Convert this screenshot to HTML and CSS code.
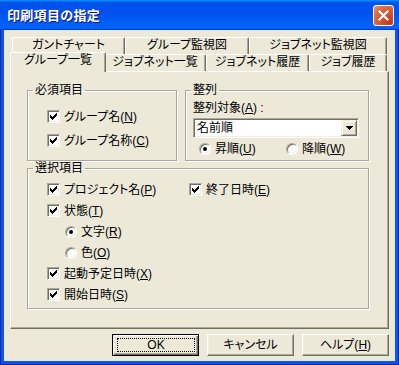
FILE: index.html
```html
<!DOCTYPE html>
<html lang="ja">
<head>
<meta charset="utf-8">
<title>印刷項目の指定</title>
<link rel="stylesheet" href="styles.css">
</head>
<body>
<div class="window">
  <div class="titlebar">
    <span class="title">印刷項目の指定</span>
    <span class="close"><svg width="19" height="19" viewBox="0 0 19 19"><path d="M5.5 5.5L13.5 13.5M13.5 5.5L5.5 13.5" stroke="#fff" stroke-width="2.2" stroke-linecap="square"/></svg></span>
  </div>
  <div class="frame">
    <div class="client">
      <div class="tabs">
        <div class="tabrow back">
          <div class="tab t-gantt">ガントチャート</div>
          <div class="tab t-gmon">グループ監視図</div>
          <div class="tab t-jmon">ジョブネット監視図</div>
        </div>
        <div class="tabrow">
          <div class="tab t-glist selected">グループ一覧</div>
          <div class="tab t-jlist">ジョブネット一覧</div>
          <div class="tab t-jhist">ジョブネット履歴</div>
          <div class="tab t-jobhist">ジョブ履歴</div>
        </div>
      </div>
      <div class="panel">
        <div class="toprow">
          <fieldset class="group g-req">
            <legend>必須項目</legend>
            <div class="gbody req-body">
              <label class="item"><span class="cb"><svg width="11" height="11" viewBox="0 0 11 11"><path d="M8 2h1v1H8zM7 3h2v1H7zM2 4h1v1H2zM6 4h3v1H6zM2 5h2v1H2zM5 5h3v1H5zM2 6h5v1H2zM3 7h3v1H3zM4 8h1v1H4z"/></svg></span><span class="lbl">グループ名(<u>N</u>)</span></label>
              <label class="item"><span class="cb"><svg width="11" height="11" viewBox="0 0 11 11"><path d="M8 2h1v1H8zM7 3h2v1H7zM2 4h1v1H2zM6 4h3v1H6zM2 5h2v1H2zM5 5h3v1H5zM2 6h5v1H2zM3 7h3v1H3zM4 8h1v1H4z"/></svg></span><span class="lbl">グループ名称(<u>C</u>)</span></label>
            </div>
          </fieldset>
          <fieldset class="group g-sort">
            <legend>整列</legend>
            <div class="gbody sort-body">
              <div class="sortlabel">整列対象(<u>A</u>) :</div>
              <div class="combo">
                <span class="combo-text">名前順</span>
                <span class="dd"><svg width="7" height="4" viewBox="0 0 7 4"><path d="M0 0h7v1H0zM1 1h5v1H1zM2 2h3v1H2zM3 3h1v1H3z"/></svg></span>
              </div>
              <div class="radios">
                <label class="item r-asc"><span class="rb on"></span><span class="lbl">昇順(<u>U</u>)</span></label>
                <label class="item"><span class="rb"></span><span class="lbl">降順(<u>W</u>)</span></label>
              </div>
            </div>
          </fieldset>
        </div>
        <fieldset class="group g-sel">
          <legend>選択項目</legend>
          <div class="gbody sel-body">
            <div class="pair">
              <label class="item col1"><span class="cb"><svg width="11" height="11" viewBox="0 0 11 11"><path d="M8 2h1v1H8zM7 3h2v1H7zM2 4h1v1H2zM6 4h3v1H6zM2 5h2v1H2zM5 5h3v1H5zM2 6h5v1H2zM3 7h3v1H3zM4 8h1v1H4z"/></svg></span><span class="lbl">プロジェクト名(<u>P</u>)</span></label>
              <label class="item"><span class="cb"><svg width="11" height="11" viewBox="0 0 11 11"><path d="M8 2h1v1H8zM7 3h2v1H7zM2 4h1v1H2zM6 4h3v1H6zM2 5h2v1H2zM5 5h3v1H5zM2 6h5v1H2zM3 7h3v1H3zM4 8h1v1H4z"/></svg></span><span class="lbl">終了日時(<u>E</u>)</span></label>
            </div>
            <label class="item"><span class="cb"><svg width="11" height="11" viewBox="0 0 11 11"><path d="M8 2h1v1H8zM7 3h2v1H7zM2 4h1v1H2zM6 4h3v1H6zM2 5h2v1H2zM5 5h3v1H5zM2 6h5v1H2zM3 7h3v1H3zM4 8h1v1H4z"/></svg></span><span class="lbl">状態(<u>T</u>)</span></label>
            <label class="item sub"><span class="rb on"></span><span class="lbl">文字(<u>R</u>)</span></label>
            <label class="item sub"><span class="rb"></span><span class="lbl">色(<u>O</u>)</span></label>
            <label class="item"><span class="cb"><svg width="11" height="11" viewBox="0 0 11 11"><path d="M8 2h1v1H8zM7 3h2v1H7zM2 4h1v1H2zM6 4h3v1H6zM2 5h2v1H2zM5 5h3v1H5zM2 6h5v1H2zM3 7h3v1H3zM4 8h1v1H4z"/></svg></span><span class="lbl">起動予定日時(<u>X</u>)</span></label>
            <label class="item"><span class="cb"><svg width="11" height="11" viewBox="0 0 11 11"><path d="M8 2h1v1H8zM7 3h2v1H7zM2 4h1v1H2zM6 4h3v1H6zM2 5h2v1H2zM5 5h3v1H5zM2 6h5v1H2zM3 7h3v1H3zM4 8h1v1H4z"/></svg></span><span class="lbl">開始日時(<u>S</u>)</span></label>
          </div>
        </fieldset>
      </div>
      <div class="buttons">
        <button class="btn default"><span class="focus">OK</span></button>
        <button class="btn">キャンセル</button>
        <button class="btn"><span class="lbl">ヘルプ(<u>H</u>)</span></button>
      </div>
    </div>
  </div>
</div>
</body>
</html>
```
FILE: styles.css
```css
* { box-sizing: border-box; }
html, body { margin: 0; padding: 0; }
body {
  width: 399px;
  height: 365px;
  overflow: hidden;
  background: #fff;
  font-family: "Liberation Sans", "Noto Sans CJK JP", sans-serif;
  font-size: 12px;
  color: #000;
  font-feature-settings: "palt";
}
u { text-decoration: underline; text-underline-offset: 1px; }

.window {
  width: 399px;
  height: 365px;
  display: flex;
  flex-direction: column;
}

.titlebar {
  height: 30px;
  flex: none;
  display: flex;
  align-items: center;
  justify-content: space-between;
  padding: 0 5px 0 7px;
  background: linear-gradient(180deg, #0997ff, #0053ee 8%, #0050ee 40%, #0062f8 88%, #0066ff 93%, #005bff 95%, #003dd7 96%, #003dd7);
}
.title {
  color: #fff;
  font-weight: bold;
  font-size: 13px;
  line-height: 16px;
  font-feature-settings: normal;
  letter-spacing: 0.3px;
  text-shadow: 1px 1px #0f1089;
  margin-top: 1px;
}
.close {
  width: 21px;
  height: 21px;
  border: 1px solid #fff;
  border-radius: 3px;
  background: radial-gradient(circle at 85% 85%, #c53818 0%, #d9552e 45%, #e07650 80%, #eda083 100%);
  display: flex;
  align-items: center;
  justify-content: center;
}
.close svg { display: block; }

.frame {
  flex: 1;
  padding: 0 1px 1px;
  background: #0026a8;
  display: flex;
}
.client {
  flex: 1;
  display: flex;
  flex-direction: column;
  background: #ece9d8;
  border: 3px solid #0b56e6;
  border-top: 0;
  padding: 7px 6px 5px;
}

/* tabs */
.tabs {
  height: 34px;
  flex: none;
  position: relative;
  z-index: 1;
}
.tabrow {
  display: flex;
  height: 17px;
  padding-left: 2px;
  align-items: flex-start;
}
.tab {
  height: 17px;
  flex: none;
  border: 1px solid;
  border-bottom: 0;
  border-color: #fff #716f64 #716f64 #fff;
  border-radius: 2px 2px 0 0;
  box-shadow: inset -1px 0 #aca899;
  background: #ece9d8;
  text-align: center;
  line-height: 15px;
  white-space: nowrap;
}
.back .tab { line-height: 14px; }
.t-gantt { width: 113px; }
.t-gmon { width: 124px; }
.t-jmon { width: 138px; }
.t-glist { width: 92px; }
.t-jlist { width: 102px; }
.t-jhist { width: 103px; }
.t-jobhist { width: 78px; }
.tab.selected {
  width: 96px;
  height: 20px;
  margin: -2px -2px 0;
  position: relative;
  z-index: 2;
}

/* panel */
.panel {
  height: 258px;
  flex: none;
  border: 1px solid;
  border-color: #fff #716f64 #716f64 #fff;
  box-shadow: inset -1px -1px #aca899;
  padding: 11px 0 0 16px;
}
.toprow {
  display: flex;
  gap: 8px;
}
fieldset.group {
  margin: 0;
  padding: 0;
  min-width: 0;
  border: 1px solid #aca899;
  box-shadow: 1px 1px 0 #fff, inset 1px 1px 0 #fff;
}
legend {
  padding: 0 2px;
  margin-left: 5px;
  line-height: 14px;
}
.g-req { width: 150px; height: 78px; }
.g-sort { width: 184px; height: 78px; }
.g-sel { width: 342px; height: 148px; margin-top: 5px; }

.gbody { display: flex; flex-direction: column; }
.req-body { padding: 13px 0 0 19px; gap: 11px; }
.sort-body { padding: 4px 0 0 7px; }
.sel-body { padding: 8px 0 0 19px; gap: 8px; }

.item {
  display: flex;
  align-items: center;
  height: 13px;
  white-space: nowrap;
  line-height: 14px;
}
.lbl { white-space: nowrap; }
.pair { display: flex; }
.col1 { width: 142px; }
.sub { padding-left: 18px; }

.cb {
  width: 13px;
  height: 13px;
  flex: none;
  margin-right: 4px;
  border: 1px solid;
  border-color: #aca899 #fff #fff #aca899;
  box-shadow: inset 1px 1px #716f64, inset -1px -1px #f1efe2;
  background: #fff;
}
.cb svg { display: block; }

.rb {
  width: 12px;
  height: 12px;
  flex: none;
  margin-right: 4px;
  border-radius: 50%;
  border: 1px solid;
  border-color: #aca899 #fff #fff #aca899;
  box-shadow: inset 1px 1px #716f64, inset -1px -1px #f1efe2;
  background: #fff;
  position: relative;
}
.rb.on::after {
  content: "";
  position: absolute;
  left: 3px;
  top: 3px;
  width: 4px;
  height: 4px;
  border-radius: 50%;
  background: #000;
}

.sortlabel { height: 14px; line-height: 14px; }
.combo {
  margin-top: 3px;
  width: 166px;
  height: 20px;
  display: flex;
  align-items: center;
  border: 1px solid;
  border-color: #aca899 #fff #fff #aca899;
  box-shadow: inset 1px 1px #716f64, inset -1px -1px #f1efe2;
  background: #fff;
  padding: 1px;
}
.combo-text { padding-left: 2px; flex: 1; line-height: 14px; }
.dd {
  width: 16px;
  height: 16px;
  flex: none;
  border: 1px solid;
  border-color: #f1efe2 #716f64 #716f64 #f1efe2;
  box-shadow: inset 1px 1px #fff, inset -1px -1px #aca899;
  background: #ece9d8;
  display: flex;
  align-items: center;
  justify-content: center;
}
.dd svg { display: block; }
.radios {
  display: flex;
  margin-top: 4px;
  padding-left: 6px;
}
.r-asc { width: 87px; }

/* buttons */
.buttons {
  display: flex;
  justify-content: flex-end;
  gap: 8px;
  margin-top: 5px;
  height: 22px;
}
.btn {
  -webkit-appearance: none;
  appearance: none;
  margin: 0;
  padding: 0;
  font: inherit;
  color: #000;
  width: 87px;
  height: 22px;
  border: 1px solid;
  border-color: #fff #716f64 #716f64 #fff;
  box-shadow: inset -1px -1px #aca899, inset 1px 1px #f1efe2;
  background: #ece9d8;
  display: flex;
  align-items: center;
  justify-content: center;
  line-height: 14px;
}
.btn.default {
  border-color: #000;
  box-shadow: inset 1px 1px #fff, inset -1px -1px #716f64, inset -2px -2px #aca899;
  padding: 3px 3px 3px 4px;
}
.focus {
  flex: 1;
  align-self: stretch;
  border: 1px dotted #000;
  display: flex;
  align-items: center;
  justify-content: center;
}
```
